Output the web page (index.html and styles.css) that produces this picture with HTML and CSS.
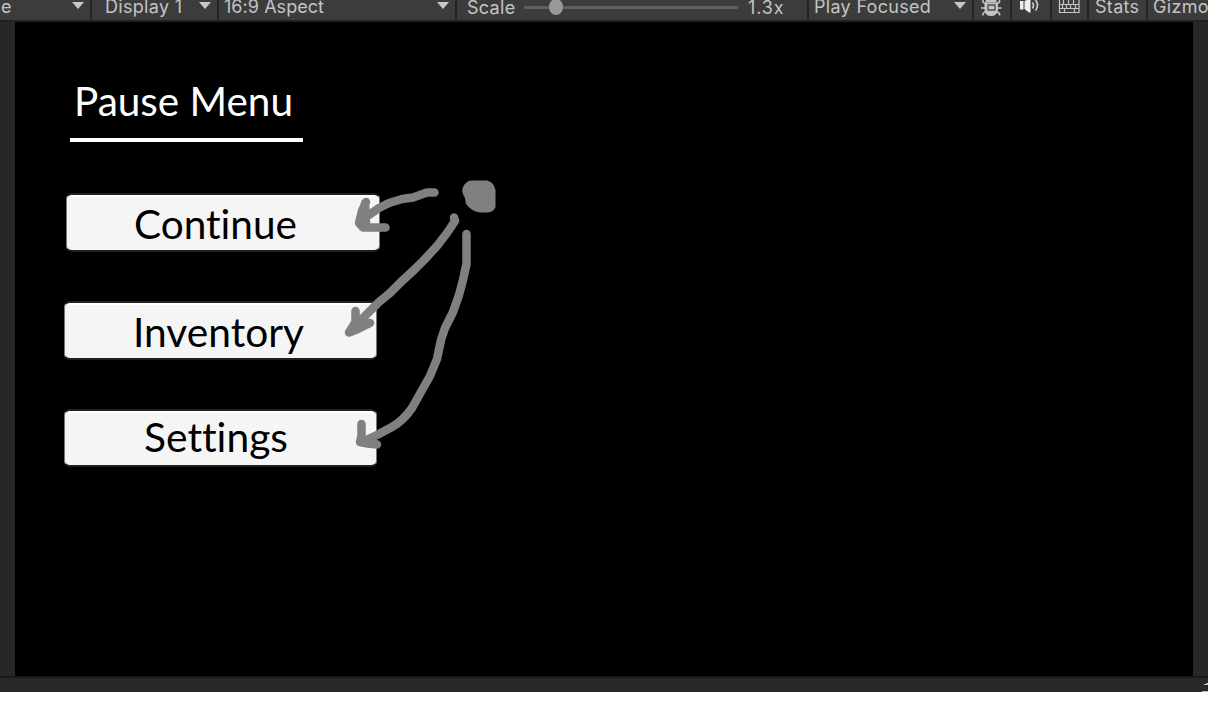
FILE: index.html
```html
<!DOCTYPE html>
<html lang="en">
<head>
<meta charset="utf-8">
<title>Game view</title>
<link rel="stylesheet" href="styles.css">
</head>
<body>
<div class="editor">
  <div class="toolbar">
    <div class="cell mode"><span>e</span><i class="caret"></i></div>
    <div class="cell display"><span>Display 1</span><i class="caret"></i></div>
    <div class="cell aspect"><span>16:9 Aspect</span><i class="caret"></i></div>
    <div class="cell scale"><span>Scale</span><div class="slider"><b class="knob"></b></div><span class="value">1.3x</span></div>
    <div class="cell focus"><span>Play Focused</span><i class="caret"></i></div>
    <div class="cell bug"><svg width="22" height="17" viewBox="0 0 22 17"><path d="M6 0H16L18 4V10Q17 16 11 16T4.500 10V4Z" fill="#c4c4c4"/><path d="M3 0V2L6 4.500M19.500 0V2L16 4.500M1 8H5M17 8H21.500M3 15.500V13.500L6 11M19.500 15.500V13.500L16 11" fill="none" stroke="#c4c4c4" stroke-width="1.600"/><path d="M8 5H15V10H8Z" fill="#c4c4c4" stroke="#505050" stroke-width="1.400"/><path d="M6 2.500H17" stroke="#999" stroke-width="1"/></svg></div>
    <div class="cell sound"><svg width="22" height="15" viewBox="0 0 22 15"><path d="M1 1H4.500V9.500H1ZM5.500 1L8 0H11.500V12.500H10L5.500 9Z" fill="#f0f0f0"/><path d="M13.500 2.500Q15.500 5.500 13.500 8.500M16.500 0Q20.500 5 16.500 10.500" fill="none" stroke="#ccc" stroke-width="1.700"/></svg></div>
    <div class="cell keys"><svg width="22" height="14" viewBox="0 0 22 14"><path d="M1.500 0V12.500H21V0M1 4.500H21M1 8.500H21M5.500 0V4.500M10.500 0V4.500M15.500 0V4.500M4.500 4.500V8.500M8.500 4.500V8.500M12.500 4.500V8.500M17.500 4.500V8.500M6.500 8.500V12.500M16.500 8.500V12.500" fill="none" stroke="#c4c4c4" stroke-width="1.200"/></svg></div>
    <div class="cell stats"><span>Stats</span></div>
    <div class="cell gizmos"><span>Gizmo</span></div>
  </div>
  <div class="game">
    <div class="title"><svg width="240" height="56"><text x="1" y="40" textLength="219" lengthAdjust="spacingAndGlyphs">Pause Menu</text></svg></div>
    <div class="rule"></div>
    <div class="menu">
      <div class="button first"><svg width="312" height="54"><text x="67" y="44" textLength="163" lengthAdjust="spacingAndGlyphs">Continue</text></svg></div>
      <div class="button"><svg width="312" height="54"><text x="68" y="44" textLength="171" lengthAdjust="spacingAndGlyphs">Inventory</text></svg></div>
      <div class="button last"><svg width="312" height="54"><text x="79" y="41" textLength="144" lengthAdjust="spacingAndGlyphs">Settings</text></svg></div>
    </div>
    <svg class="sketch" width="190" height="290" viewBox="330 170 190 290">
      <path class="blob" d="M471 180.500H487Q494 182 495.500 190V207Q494 212 487 212.500H480Q471 211 466 204L465 198Q461 192 463 187Q466 181 471 180.500Z"/>
      <path d="M434.500 192.500H427L413 197.500L402 199L389 203L379 208L363 219M366 202L362 211L359 223L363 227.500H385.500M365 203L366 222"/>
      <path d="M454 217.500L455 221L447 233L437 246L425 259L414 270L402 281L390 293L379 302L370 311L350 331M355.500 311V322L349 332.500L358 329L370 323L357 325"/>
      <path d="M466.500 234V264L463 280L459 295L453 312L445 328L441 340L437 359L430 376L421 392L412 408Q403 421 392 427L377 435L362 442M361.500 424V436L360 442L368 443.500L377 444.500L365 440"/>
    </svg>
  </div>
  <div class="footer"><svg class="corner" width="6" height="10" viewBox="0 0 6 10"><path d="M2 2.500H6M4 1.500H6M0 9.500H6" stroke="#bbb" fill="none"/></svg></div>
</div>
</body>
</html>
```
FILE: styles.css
```css
body { margin: 0; background: #fff; }
.editor {
  width: 1208px;
  height: 692px;
  background: #272727;
  overflow: hidden;
  display: flex;
  flex-direction: column;
}
.toolbar {
  height: 22px;
  box-sizing: border-box;
  border-bottom: 2px solid #202020;
  background: #3c3c3c;
  display: flex;
  flex: none;
  color: #c4c4c4;
  font: 18px/22px Inter, sans-serif;
  letter-spacing: 0.3px;
  white-space: nowrap;
}
.cell {
  box-sizing: border-box;
  height: 20px;
  border-right: 2px solid #242424;
  display: flex;
  flex: none;
  align-items: flex-start;
}
.cell span { margin-top: -4px; }
.caret {
  margin: 2px 6px 0 auto;
  width: 12px;
  height: 7px;
  flex: none;
  background: #c8c8c8;
  clip-path: polygon(0 0, 100% 0, 50% 100%);
}
.mode { width: 92px; padding-left: 1px; }
.display { width: 127px; padding-left: 13px; }
.aspect { width: 238px; padding-left: 5px; letter-spacing: 0.05px; }
.scale { width: 352px; padding-left: 10px; }
.scale span { margin-top: -3px; width: 57px; }
.scale .value { margin-left: 10px; letter-spacing: 0.9px; }
.slider { width: 214px; height: 3px; margin-top: 6px; background: #5e5e5e; }
.knob { display: block; width: 14px; height: 16px; margin: -7px 0 0 25px; border-radius: 50%; background: #999; }
.focus { width: 165px; padding-left: 5px; }
.bug { width: 38px; padding-left: 6px; }
.sound { width: 40px; padding-left: 7px; }
.keys { width: 37px; padding-left: 6px; }
.stats { width: 59px; padding-left: 6px; }
.gizmos { width: 61px; padding-left: 5px; border-right: 0; }

.game {
  position: relative;
  width: 1178px;
  height: 654px;
  box-sizing: border-box;
  margin-left: 15px;
  padding: 54px 0 0 49px;
  background: #000;
  flex: none;
}
.game svg { display: block; }
.game text { font: 41px Lato, sans-serif; font-variant-ligatures: none; }
.title { height: 62px; padding-left: 9px; }
.title text { fill: #fff; }
.rule { width: 233px; height: 4px; margin-left: 6px; background: #fff; }
.menu { display: flex; flex-direction: column; gap: 49px; padding-top: 51px; }
.button {
  width: 313px;
  height: 59px;
  box-sizing: border-box;
  border: 1px solid #777;
  border-top: 2px solid #222;
  border-bottom: 2px solid #202020;
  border-radius: 6px;
  background: #f5f5f5;
  box-shadow: inset 0 2px #fff;
}
.first { margin-left: 2px; width: 314px; }
.last { height: 58px; }
.sketch { position: absolute; left: 315px; top: 148px; fill: none; stroke: #808080; stroke-width: 8.5px; stroke-linecap: round; stroke-linejoin: round; }
.sketch .blob { fill: #808080; stroke: none; }
.footer {
  flex: 1;
  border-top: 2px solid #1a1a1a;
  background: #282828;
  display: flex;
  justify-content: flex-end;
  align-items: flex-end;
}
```
